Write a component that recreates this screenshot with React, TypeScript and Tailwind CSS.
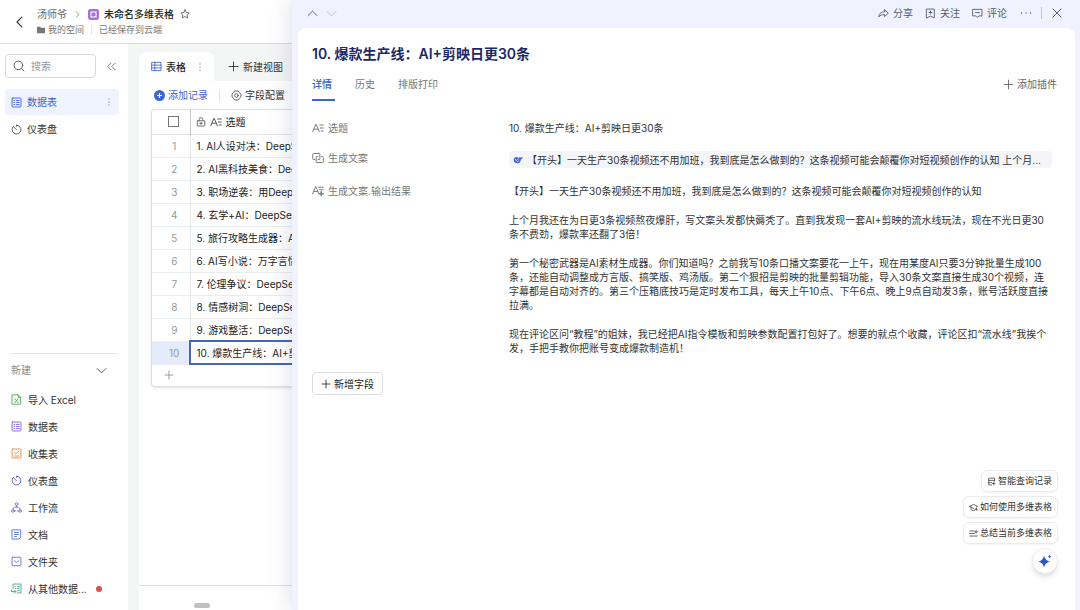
import { useState, type ReactNode } from 'react';

type IconProps = { className?: string; children: ReactNode };

function Icon({ className = 'size-3', children }: IconProps) {
  return (
    <svg
      viewBox="0 0 16 16"
      fill="none"
      stroke="currentColor"
      strokeWidth="1.3"
      strokeLinecap="round"
      strokeLinejoin="round"
      className={`shrink-0 ${className}`}
      aria-hidden="true"
    >
      {children}
    </svg>
  );
}

const GridIcon = ({ className }: { className?: string }) => (
  <Icon className={className}>
    <rect x="1.5" y="1.5" width="13" height="13" rx="1" />
    <path d="M4.2 5h1M4.2 8h1M4.2 11h1M7.5 5h4.5M7.5 8h4.5M7.5 11h4.5" />
  </Icon>
);

const GaugeIcon = ({ className }: { className?: string }) => (
  <Icon className={className}>
    <path d="M8 1.7a6.4 6.4 0 1 1-5.8 3.700M5 5.200l3 3.200M8 1.700v1.500M2.200 5.400 4 3.200" />
  </Icon>
);

const PlusIcon = ({ className }: { className?: string }) => (
  <Icon className={className}>
    <path d="M8 1.5v13M1.5 8h13" />
  </Icon>
);

const TextIcon = ({ className }: { className?: string }) => (
  <Icon className={className}>
    <path d="M1 13 5.2 3h.4L9.8 13M2.5 9.6h5.8M10.3 4H15M11.2 8H15M12.2 12H15" />
  </Icon>
);

const TextOutputIcon = ({ className }: { className?: string }) => (
  <Icon className={className}>
    <path d="M.8 12 4.8 2h.4l4 10M2.2 8.6h5.6M8.800 3H15M10 6.300H15" />
    <path
      d="M12.300 8.500c.4 2.100 1 2.700 3.200 3.200-2.200.5-2.800 1.100-3.200 3.200-.4-2.100-1-2.700-3.200-3.200 2.200-.5 2.800-1.100 3.200-3.200z"
      fill="currentColor"
      strokeWidth="1"
    />
  </Icon>
);

const LinkedIcon = ({ className }: { className?: string }) => (
  <Icon className={className}>
    <path d="M3.5 10H2a1 1 0 0 1-1-1V3a1 1 0 0 1 1-1h7.5a1 1 0 0 1 1 1v6a1 1 0 0 1-1 1H8" />
    <path d="M13 6h1a1 1 0 0 1 1 1v6a1 1 0 0 1-1 1H6.5a1 1 0 0 1-1-1V7a1 1 0 0 1 1-1H8" />
  </Icon>
);

const MoreIcon = ({ className }: { className?: string }) => (
  <Icon className={className}>
    <path d="M8 2v.1M8 8v.1M8 14v.1" strokeWidth="2.6" />
  </Icon>
);

const createItems: { label: string; color: string; icon: ReactNode; dot?: boolean }[] = [
  {
    label: '导入 Excel',
    color: 'text-[#4fa65a]',
    icon: (
      <Icon className="size-[11px]">
        <path d="M2 1.2h8.5L14 4.7v10.100H2zM10.300 1.400V5H14M5.600 7l4.600 5.500M10.200 7l-4.600 5.500" />
      </Icon>
    ),
  },
  { label: '数据表', color: 'text-[#7d62c4]', icon: <GridIcon className="size-[11px]" /> },
  {
    label: '收集表',
    color: 'text-[#dc8a40]',
    icon: (
      <Icon className="size-[11px]">
        <rect x="1.5" y="1.5" width="13" height="13" rx="1" />
        <path d="m4.5 6.5 2.3 2.3L11.500 4.500M4.500 11.700h7" />
      </Icon>
    ),
  },
  { label: '仪表盘', color: 'text-[#5a5fc0]', icon: <GaugeIcon className="size-[11px]" /> },
  {
    label: '工作流',
    color: 'text-[#8069cc]',
    icon: (
      <Icon className="size-[11px]">
        <circle cx="8" cy="3" r="2" />
        <circle cx="2.8" cy="13" r="1.900" />
        <circle cx="13.2" cy="13" r="1.900" />
        <path d="M8 5v2.500M2.800 11c0-2.200 1-3.500 3.200-3.500h4c2.200 0 3.200 1.300 3.200 3.500M4.800 13h2M9.200 13h2" />
      </Icon>
    ),
  },
  {
    label: '文档',
    color: 'text-[#4f74cc]',
    icon: (
      <Icon className="size-[11px]">
        <path d="M2 1.300h12v10.900l-2.500 2.500H2zM5 5h6M5 8h6M5 11h3" />
      </Icon>
    ),
  },
  {
    label: '文件夹',
    color: 'text-[#6a70c4]',
    icon: (
      <Icon className="size-[11px]">
        <rect x="1.5" y="1.8" width="13" height="12.4" rx="1" />
        <path d="m5 6.800 3 2.700 3-2.700" />
      </Icon>
    ),
  },
  {
    label: '从其他数据...',
    color: 'text-[#45a583]',
    dot: true,
    icon: (
      <Icon className="size-[11px]">
        <path d="M3 8V1.500h11.500v13H9M6 5h.5M9 5h3M6.500 8H7M9.500 8H12M9.500 11H12M1 12.500h6M4.800 10.200 7 12.500l-2.200 2.300M1 10v2.500" />
      </Icon>
    ),
  },
];

const records = [
  'AI人设对决：DeepSeek',
  'AI黑科技美食：DeepSeek',
  '职场逆袭：用DeepSeek',
  '玄学+AI：DeepSeek',
  '旅行攻略生成器：AI',
  'AI写小说：万字言情',
  '伦理争议：DeepSeek',
  '情感树洞：DeepSeek',
  '游戏整活：DeepSeek',
  '爆款生产线：AI+剪映日更30条',
];

const paragraphs = [
  '【开头】一天生产30条视频还不用加班，我到底是怎么做到的？这条视频可能会颠覆你对短视频创作的认知',
  '上个月我还在为日更3条视频熬夜爆肝，写文案头发都快薅秃了。直到我发现一套AI+剪映的流水线玩法，现在不光日更30条不费劲，爆款率还翻了3倍！',
  '第一个秘密武器是AI素材生成器。你们知道吗？之前我写10条口播文案要花一上午，现在用某度AI只要3分钟批量生成100条，还能自动调整成方言版、搞笑版、鸡汤版。第二个狠招是剪映的批量剪辑功能，导入30条文案直接生成30个视频，连字幕都是自动对齐的。第三个压箱底技巧是定时发布工具，每天上午10点、下午6点、晚上9点自动发3条，账号活跃度直接拉满。',
  '现在评论区问“教程”的姐妹，我已经把AI指令模板和剪映参数配置打包好了。想要的就点个收藏，评论区扣“流水线”我挨个发，手把手教你把账号变成爆款制造机！',
];

const tabs = ['详情', '历史', '排版打印'];

function Header() {
  return (
    <header className="flex h-11 shrink-0 items-center border-b border-[#dcdddd] bg-white pl-[14px]">
      <button aria-label="返回" className="text-[#333]">
        <Icon className="size-3">
          <path d="M10.5 1.5 4 8l6.500 6.500" strokeWidth="1.5" />
        </Icon>
      </button>
      <div className="ml-[11px] flex flex-col gap-px">
        <div className="flex h-4 items-center">
          <a href="#owner" className="text-[#666]">汤师爷</a>
          <Icon className="ml-[6px] size-[9px] text-[#777]">
            <path d="m5.5 3 5 5-5 5" />
          </Icon>
          <svg viewBox="0 0 16 16" className="ml-[6px] size-[11px]" aria-hidden="true">
            <rect width="16" height="16" rx="3.5" fill="#a571dc" />
            <path
              d="M7 4.500H4.500V7M9 4.500h2.500V7M11.500 9v2.500H9M7 11.500H4.500V9"
              stroke="#fff"
              strokeWidth="1.800"
              fill="none"
            />
            <path d="M8 3v2M8 11v2M3 8h2M11 8h2" stroke="#fff" strokeWidth="1.200" />
          </svg>
          <span className="ml-[5px] font-medium text-[#222]">未命名多维表格</span>
          <button aria-label="收藏" className="ml-[6px] text-[#555]">
            <Icon className="size-[10px]">
              <path d="m8 1.300 2.100 4.300 4.700.7-3.400 3.300.8 4.700L8 12.100l-4.200 2.200.8-4.700L1.200 6.300l4.700-.7z" />
            </Icon>
          </button>
        </div>
        <div className="flex h-[14px] items-center text-[9px] text-[#777]">
          <svg viewBox="0 0 16 16" className="size-2" fill="#777" aria-hidden="true">
            <path d="M0 1.500h6l2 2h8v11H0z" />
          </svg>
          <span className="ml-[3px]">我的空间</span>
          <span className="mx-[7px] h-[10px] w-px bg-[#e3e3e3]" />
          <span>已经保存到云端</span>
        </div>
      </div>
    </header>
  );
}

function Sidebar() {
  return (
    <aside className="flex w-32 shrink-0 flex-col bg-white pt-[10px] pb-2">
      <div className="flex items-center pl-[5px]">
        <label className="flex h-6 w-[91px] items-center gap-[6px] rounded border border-[#d6d7d9] pl-[7px]">
          <Icon className="size-3 text-[#555]">
            <circle cx="7.2" cy="7.2" r="5.7" />
            <path d="m11.5 11.5 3 3" />
          </Icon>
          <input
            type="text"
            aria-label="搜索"
            placeholder="搜索"
            className="w-full min-w-0 bg-transparent outline-none placeholder:text-[#999]"
          />
        </label>
        <button aria-label="收起侧栏" className="ml-[10px] text-[#666]">
          <Icon className="size-[11px]">
            <path d="M7.5 3 2.500 8l5 5M13.500 3l-5 5 5 5" />
          </Icon>
        </button>
      </div>

      <nav className="mt-[11px] flex flex-col gap-px pr-[9px] pl-[5px]">
        <a href="#data" className="flex h-[26px] items-center gap-[5px] rounded bg-[#eff2ff] px-[6px] text-[#4163cc]">
          <GridIcon className="size-[11px]" />
          数据表
          <MoreIcon className="ml-auto size-2 text-[#7f8cba]" />
        </a>
        <a href="#dashboard" className="flex h-[26px] items-center gap-[5px] px-[6px] text-[#333]">
          <GaugeIcon className="size-[11px] text-[#555]" />
          仪表盘
        </a>
      </nav>

      <div className="mx-[10px] mt-auto border-t border-[#e6e6e6]" />
      <button className="flex h-8 items-center justify-between pr-[21px] pl-[11px] text-[#888]">
        新建
        <Icon className="size-[11px] text-[#555]">
          <path d="M1.5 5 8 11.500 14.500 5" />
        </Icon>
      </button>
      <ul className="text-[#333]">
        {createItems.map((item) => (
          <li key={item.label}>
            <button className="flex h-[27px] w-full items-center gap-[6px] pl-[11px]">
              <span className={item.color}>{item.icon}</span>
              {item.label}
              {item.dot && <span className="ml-[3px] size-[6px] rounded-full bg-[#d9504f]" />}
            </button>
          </li>
        ))}
      </ul>
    </aside>
  );
}

function TableView() {
  return (
    <main className="flex min-w-0 flex-1 flex-col overflow-hidden bg-[#f4f5f5] pt-2 pl-[11px]">
      <div className="flex h-[29px] shrink-0 items-center">
        <div className="flex h-full w-[75px] shrink-0 items-center rounded-t-md bg-white pl-3 text-[#222]">
          <Icon className="size-[11px] text-[#4767c9]">
            <path d="M1.5 2h13v12h-13zM5.500 2v12M1.500 6h13M1.500 10h13" />
          </Icon>
          <span className="ml-1 font-medium">表格</span>
          <MoreIcon className="ml-[10px] size-2 text-[#888]" />
        </div>
        <button className="ml-[14px] flex shrink-0 items-center gap-1 text-[#333]">
          <PlusIcon className="size-[11px]" />
          新建视图
        </button>
      </div>

      <div className="flex flex-1 flex-col bg-white">
        <div className="flex h-7 shrink-0 items-center pl-[15px]">
          <button className="flex shrink-0 items-center gap-[3px] text-[#4163cc]">
            <svg viewBox="0 0 16 16" className="size-[11px]" aria-hidden="true">
              <circle cx="8" cy="8" r="8" fill="#3d66d8" />
              <path d="M8 4.500v7M4.500 8h7" stroke="#fff" strokeWidth="1.600" />
            </svg>
            添加记录
          </button>
          <span className="mx-[11px] h-[11px] w-px shrink-0 bg-[#e3e3e3]" />
          <button className="flex shrink-0 items-center gap-[3px] text-[#333]">
            <Icon className="size-[11px] text-[#555]">
              <path d="M5.200 1.500h5.600l1 2 2.700 2.500v4l-2.700 2.500-1 2H5.200l-1-2L1.500 10V6l2.700-2.500z" />
              <circle cx="8" cy="8" r="2.6" />
            </Icon>
            字段配置
          </button>
        </div>

        <div className="ml-3 shrink-0 rounded-l border-y border-l border-[#dfe0e2] shadow-sm">
          <table className="w-[320px] table-fixed border-collapse text-left text-[#222]">
            <thead>
              <tr className="h-6 border-b border-[#e3e4e6]">
                <th className="w-[38px] border-r border-[#c4c5c8] pl-[6px]">
                  <span className="flex justify-center">
                    <input
                      type="checkbox"
                      aria-label="全选"
                      className="size-[11px] appearance-none border border-[#777] bg-white"
                    />
                  </span>
                </th>
                <th className="pl-[5px] font-normal">
                  <span className="flex items-center gap-1">
                    <Icon className="size-[10px] text-[#555]">
                      <rect x="2" y="6" width="12" height="8.5" rx="1" />
                      <path d="M5 6V4a3 3 0 0 1 6 0v2M6 10.200h4M8 8.500v3.500" />
                    </Icon>
                    <TextIcon className="size-3 text-[#555]" />
                    选题
                  </span>
                </th>
              </tr>
            </thead>
            <tbody>
              {records.map((name, i) => {
                const active = i === records.length - 1;
                return (
                  <tr key={name} className="h-[23px] border-b border-[#ebecee]">
                    <td className={`border-r border-[#e3e4e6] pl-[7px] text-center text-[#999] ${active ? 'bg-[#e4ebfb]' : ''}`}>
                      {i + 1}
                    </td>
                    <td
                      className={`pl-[6px] whitespace-nowrap ${active ? 'outline-2 -outline-offset-1 outline-[#4665b5]' : ''}`}
                    >
                      {i + 1}. {name}
                    </td>
                  </tr>
                );
              })}
            </tbody>
          </table>
          <button aria-label="新增记录" className="flex h-[21px] w-full items-center pl-3 text-[#888]">
            <PlusIcon className="size-[10px]" />
          </button>
        </div>

        <div className="mt-auto flex h-[25px] items-end border-t border-[#dfe0e2] pb-[2px] pl-[55px]">
          <div className="h-[5px] w-4 rounded-full bg-[#bfc0c2]" />
        </div>
      </div>
    </main>
  );
}

function DrawerBar() {
  return (
    <div className="flex h-7 shrink-0 items-center justify-between pr-3 pb-[2px] pl-[9px] text-[#555b6e]">
      <div className="flex gap-2">
        <button aria-label="上一条">
          <Icon className="size-[11px]">
            <path d="M1.5 11 8 4.500l6.500 6.500" />
          </Icon>
        </button>
        <button aria-label="下一条" className="text-[#b9bfd0]">
          <Icon className="size-[11px]">
            <path d="M1.5 5 8 11.500 14.500 5" />
          </Icon>
        </button>
      </div>
      <div className="flex items-center">
        <button className="flex items-center gap-1">
          <Icon className="size-[11px]">
            <path d="M9.500 2.500 15 7.500l-5.500 5V9.700C5.500 9.500 3 10.500 1 13c.3-4.500 3.500-7.400 8.500-7.700z" />
          </Icon>
          分享
        </button>
        <button className="ml-3 flex items-center gap-1">
          <Icon className="size-[11px]">
            <path d="M2.500 1.500h11v13L8 11.800l-5.500 2.700zM8 4.300v4.400M5.800 6.500h4.400" />
          </Icon>
          关注
        </button>
        <button className="ml-3 flex items-center gap-1">
          <Icon className="size-[11px]">
            <path d="M1.500 2h13v9.500H10L8 13.700l-2-2.200H1.500zM5 6.700h6" />
          </Icon>
          评论
        </button>
        <button aria-label="更多" className="ml-[13px]">
          <Icon className="size-3">
            <path d="M2 8h.1M8 8h.1M14 8h.1" strokeWidth="1.8" />
          </Icon>
        </button>
        <span className="mx-[9px] h-3 w-px bg-[#c3c7d4]" />
        <button aria-label="关闭">
          <Icon className="size-3">
            <path d="m2.500 2.500 11 11M13.500 2.500l-11 11" />
          </Icon>
        </button>
      </div>
    </div>
  );
}

function FieldRow({ icon, label, children }: { icon: ReactNode; label: string; children: ReactNode }) {
  return (
    <div className="flex items-start">
      <dt className="flex h-[14px] w-[197px] shrink-0 items-center gap-1 text-[#777]">
        {icon}
        {label}
      </dt>
      <dd className="min-w-0 flex-1 text-[#333]">{children}</dd>
    </div>
  );
}

const assistantActions = [
  {
    label: '智能查询记录',
    path: 'M13.500 7V2H3v12h5M3 6h10.500M3 10h5M12 9v5M9.800 11.500h4.400',
  },
  {
    label: '如何使用多维表格',
    path: 'M1 6 8 2.500 15 6l-2 1M1 6l7 3.500M3.500 7.500v4c2 2.500 6 2.500 7.500 1M13 9v4M11 11h4',
  },
  {
    label: '总结当前多维表格',
    path: 'M1.500 3.500h7M1.500 8h8M1.500 12.500h13M12.500 2.500v5M10 5h5',
  },
];

function Assistant() {
  return (
    <div className="absolute right-[22px] bottom-9 flex flex-col items-end gap-1 text-[9px] text-[#333]">
      {assistantActions.map((action) => (
        <button
          key={action.label}
          className="flex h-[22px] items-center gap-[2px] rounded-md border border-[#ebebee] bg-white px-[5px] shadow-xs"
        >
          <Icon className="size-[9px]">
            <path d={action.path} />
          </Icon>
          {action.label}
        </button>
      ))}
      <button
        aria-label="AI 助手"
        className="flex size-[26px] items-center justify-center rounded-full border border-[#ececf0] bg-white shadow-md"
      >
        <svg viewBox="0 0 16 16" className="size-[14px]" fill="#2f56c8" aria-hidden="true">
          <path d="M7 2c1.300 4 2.500 5.400 6.800 6.700C9.500 10 8.300 11.400 7 15.400 5.700 11.400 4.500 10 .2 8.700 4.500 7.400 5.700 6 7 2z" />
          <path d="M13.300.5c.5 1.500.9 1.900 2.400 2.400-1.500.5-1.900.9-2.400 2.400-.5-1.500-.9-1.900-2.400-2.400 1.500-.5 1.900-.9 2.400-2.400z" />
        </svg>
      </button>
    </div>
  );
}

function RecordDrawer() {
  const [tab, setTab] = useState(0);

  return (
    <section className="relative z-10 flex min-w-0 flex-1 flex-col bg-[#f0f3ff] pr-[5px] pl-[6px] shadow-[-4px_0_20px_rgba(60,70,110,0.14)]">
      <DrawerBar />
      <div className="flex flex-1 flex-col rounded-t-lg bg-white pt-4 pr-[18px] pl-[14px]">
        <h1 className="text-[14px] leading-5 font-semibold text-[#1b2a66]">10. 爆款生产线：AI+剪映日更30条</h1>

        <div className="mt-3 flex items-start justify-between">
          <div role="tablist" className="flex gap-5">
            {tabs.map((name, i) => (
              <button
                key={name}
                role="tab"
                aria-selected={tab === i}
                onClick={() => setTab(i)}
                className={`flex h-[25px] min-w-[23px] items-start border-b-2 pt-px ${
                  tab === i ? 'border-[#3d66c9] font-medium text-[#3d62c4]' : 'border-transparent text-[#777]'
                }`}
              >
                {name}
              </button>
            ))}
          </div>
          <button className="flex items-center gap-[3px] pt-px text-[#666]">
            <PlusIcon className="size-[11px]" />
            添加插件
          </button>
        </div>

        <dl className="mt-5 mr-[5px] flex flex-col gap-4">
          <FieldRow icon={<TextIcon className="size-3" />} label="选题">
            <div>10. 爆款生产线：AI+剪映日更30条</div>
          </FieldRow>
          <FieldRow icon={<LinkedIcon className="size-3" />} label="生成文案">
            <div className="flex h-[17px] items-center rounded bg-[#f3f5f8] pr-2 pl-1">
              <svg viewBox="0 0 16 16" className="size-[10px] shrink-0" fill="#4467e0" aria-hidden="true">
                <path d="M1 8c0-3 2.300-5 5.200-4.700C7.500 3.500 8.300 5 9.500 6c.2-1.200-.2-2.200.3-3 1 .9 1.700 1.200 2.700 1 1-.3 1.600-.9 3-1-.2 2.300-1.300 3.700-3 4.200 0 3.300-2.200 6-5.500 6C3.500 13.200 1 11.200 1 8z" />
                <path d="M3.200 7.500c2 .2 3.600 1.700 5 3.600M7.300 7.200c.8.200 1.200.6 1.300 1.300" stroke="#fff" strokeWidth="1.3" fill="none" />
              </svg>
              <span className="ml-1 truncate">{paragraphs[0]} 上个月...</span>
            </div>
          </FieldRow>
          <FieldRow icon={<TextOutputIcon className="size-3" />} label="生成文案.输出结果">
            <div className="flex flex-col gap-[15px]">
              {paragraphs.map((text) => (
                <p key={text}>{text}</p>
              ))}
            </div>
          </FieldRow>
        </dl>

        <button className="mt-[17px] flex h-[23px] items-center gap-[3px] self-start rounded border border-[#dcdde0] px-2 text-[#222]">
          <PlusIcon className="size-[10px]" />
          新增字段
        </button>
      </div>
      <Assistant />
    </section>
  );
}

export default function App() {
  return (
    <div className="flex min-h-screen overflow-hidden bg-white font-['Inter','Noto_Sans_CJK_SC',sans-serif] text-[10px] leading-[14px]">
      <div className="flex w-[292px] shrink-0 flex-col overflow-hidden">
        <Header />
        <div className="flex flex-1">
          <Sidebar />
          <TableView />
        </div>
      </div>
      <RecordDrawer />
    </div>
  );
}
